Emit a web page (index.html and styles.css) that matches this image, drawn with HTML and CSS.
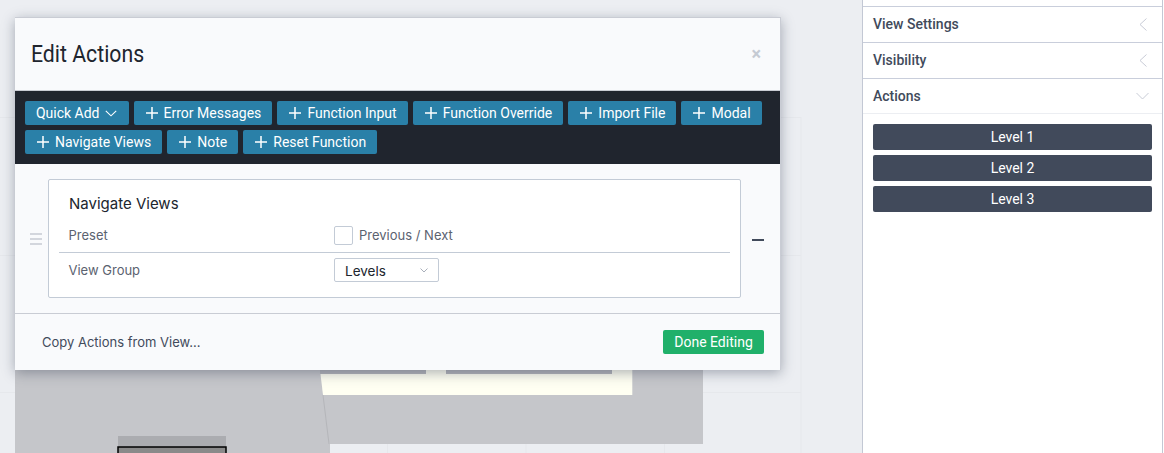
FILE: index.html
```html
<!DOCTYPE html>
<html lang="en">
<head>
<meta charset="utf-8">
<title>Edit Actions</title>
<link rel="stylesheet" href="styles.css">
</head>
<body>
<div class="app">
  <main class="canvas">
    <svg class="plan" width="862" height="453" viewBox="0 0 862 453">
      <g class="grid">
        <path d="M0 117.5H801M0 255.5H801M0 392.5H801M111.5 117V453M249.5 117V453M387.5 117V453M526 117V453M664.5 117V453M801 117V453"/>
      </g>
      <path class="slab" d="M15 370H330V453H15Z"/>
      <path class="slab" d="M320 370H703V444H330L328 444Z"/>
      <path class="sun" d="M320 370H632.300V395H323Z"/>
      <path class="edge" d="M323 395L329 444"/>
      <rect class="strip" x="320" y="370" width="106" height="4"/>
      <rect class="strip" x="446" y="370" width="166" height="4"/>
      <rect class="strip-light" x="118" y="436" width="108" height="11"/>
      <rect class="block" x="118" y="447" width="108" height="12"/>
    </svg>
    <section class="modal">
      <header class="modal-head">
        <h1 class="modal-title">Edit Actions</h1>
        <span class="close">×</span>
      </header>
      <div class="toolbar">
        <button class="tool">Quick Add
          <svg class="chev" width="12" height="7" viewBox="0 0 12 7"><path d="M.8.8L6 5.8 11.2.8"/></svg>
        </button>
        <button class="tool"><svg class="plus" width="12" height="12" viewBox="0 0 12 12"><path d="M6 0V12M0 6H12"/></svg>Error Messages</button>
        <button class="tool"><svg class="plus" width="12" height="12" viewBox="0 0 12 12"><path d="M6 0V12M0 6H12"/></svg>Function Input</button>
        <button class="tool"><svg class="plus" width="12" height="12" viewBox="0 0 12 12"><path d="M6 0V12M0 6H12"/></svg>Function Override</button>
        <button class="tool"><svg class="plus" width="12" height="12" viewBox="0 0 12 12"><path d="M6 0V12M0 6H12"/></svg>Import File</button>
        <button class="tool"><svg class="plus" width="12" height="12" viewBox="0 0 12 12"><path d="M6 0V12M0 6H12"/></svg>Modal</button>
        <button class="tool"><svg class="plus" width="12" height="12" viewBox="0 0 12 12"><path d="M6 0V12M0 6H12"/></svg>Navigate Views</button>
        <button class="tool"><svg class="plus" width="12" height="12" viewBox="0 0 12 12"><path d="M6 0V12M0 6H12"/></svg>Note</button>
        <button class="tool"><svg class="plus" width="12" height="12" viewBox="0 0 12 12"><path d="M6 0V12M0 6H12"/></svg>Reset Function</button>
      </div>
      <div class="modal-body">
        <span class="drag"><i></i><i></i><i></i></span>
        <div class="card">
          <h2 class="card-title">Navigate Views</h2>
          <div class="row row-first">
            <span class="label">Preset</span>
            <label class="check"><span class="box"></span>Previous / Next</label>
          </div>
          <div class="row row-second">
            <span class="label">View Group</span>
            <span class="select"><span class="select-text">Levels</span>
              <svg class="select-chev" width="8" height="5" viewBox="0 0 8 5"><path d="M.5.5L4 4 7.500.5"/></svg>
            </span>
          </div>
        </div>
        <span class="minus"></span>
      </div>
      <footer class="modal-foot">
        <span class="copy">Copy Actions from View...</span>
        <button class="done">Done Editing</button>
      </footer>
    </section>
  </main>
  <aside class="sidebar">
    <div class="panel panel-top">View Settings
      <svg class="arrow" width="8" height="13" viewBox="0 0 8 13"><path d="M7.500.5L1 6.500 7.500 12.500"/></svg>
    </div>
    <div class="panel">Visibility
      <svg class="arrow" width="8" height="13" viewBox="0 0 8 13"><path d="M7.500.5L1 6.500 7.500 12.500"/></svg>
    </div>
    <div class="panel panel-open">Actions
      <svg class="arrow" width="13" height="8" viewBox="0 0 13 8"><path d="M.5 1L6.500 7 12.500 1"/></svg>
    </div>
    <div class="levels">
      <button class="level">Level 1</button>
      <button class="level">Level 2</button>
      <button class="level">Level 3</button>
    </div>
  </aside>
</div>
</body>
</html>
```

FILE: styles.css
```css
* { box-sizing: border-box; }
html, body { margin: 0; height: 100%; }
body { background: #fff; font-family: Inter, "Liberation Sans", sans-serif; overflow: hidden; }
button { font: inherit; border: 0; margin: 0; }

.app { display: flex; width: 1164px; height: 453px; }

.canvas { position: relative; width: 862px; height: 453px; background: #eceef2; overflow: hidden; }
.plan { position: absolute; left: 0; top: 0; display: block; }
.grid path { fill: none; stroke: #e6e8ec; stroke-width: 1; }
.slab { fill: #c5c6ca; }
.sun { fill: #fffff2; }
.edge { fill: none; stroke: #b5b6ba; stroke-width: 1; }
.strip { fill: #b4b5bb; }
.strip-light { fill: #abacb0; }
.block { fill: #8a8a8a; stroke: #000; stroke-width: 1.500; }

.modal { position: absolute; left: 15px; top: 17px; width: 766px; height: 353px; background: #f9fafc; border-top: 1px solid #c9ccd4; border-right: 1px solid #c9ccd4; box-shadow: 0 3px 12px rgba(50, 60, 80, .4); display: flex; flex-direction: column; }
.modal-head { height: 73px; flex: none; display: flex; align-items: center; justify-content: space-between; padding: 0 19px 0 16px; border-bottom: 1px solid #c9ccd4; }
.modal-title { margin: 0; font: 400 24px/1 Roboto, sans-serif; color: #20252e; transform: scaleX(.885); transform-origin: left center; }
.close { font: 700 18px/1 Roboto, sans-serif; color: #c5cad3; }

.toolbar { flex: none; height: 73px; background: #20252e; padding: 10px 10px 0; display: flex; flex-wrap: wrap; align-content: flex-start; gap: 5px; }
.tool { height: 24px; padding: 0 11.100px 0 12px; display: inline-flex; align-items: center; gap: 6px; background: #2a80a8; color: #fff; border-radius: 2px; font: 400 14px/1 Roboto, sans-serif; }
.tool:first-child { padding-left: 10.900px; }
.plus path { fill: none; stroke: #fff; stroke-width: 1.500; }
.chev path { fill: none; stroke: #fff; stroke-width: 1.100; }

.modal-body { flex: 1; position: relative; padding: 15px 39px 15px 33px; display: flex; align-items: flex-start; }
.drag { position: absolute; left: 15px; top: 69px; display: flex; flex-direction: column; gap: 3px; }
.drag i { display: block; width: 12px; height: 2px; background: #d3d6dd; }
.card { width: 693px; height: 119px; background: #fff; border: 1px solid #c3cbd6; border-radius: 2px; padding: 0 10px; }
.card-title { margin: 0; padding: 15px 0 0 10px; height: 41px; font: 400 15px/18px Inter, sans-serif; color: #20252e; }
.row { display: flex; align-items: center; padding-left: 9.500px; font-size: 13px; color: #5b6270; }
.row-first { height: 32px; padding-bottom: 3px; border-bottom: 1px solid #c3cbd6; }
.row-second { height: 36px; padding-bottom: 2px; }
.label { width: 265.500px; flex: none; }
.check { display: flex; align-items: center; gap: 6px; }
.box { width: 19px; height: 19px; margin-top: 1px; background: #fff; border: 1px solid #c3cbd6; border-radius: 2px; }
.select { width: 105px; height: 24px; display: flex; align-items: center; justify-content: space-between; padding: 0 10px; border: 1px solid #c3cbd6; border-radius: 2px; color: #20252e; font-size: 13.500px; }
.select-text { padding-top: 2px; }
.select-chev path { fill: none; stroke: #a9afba; stroke-width: 1; }
.minus { position: absolute; left: 737px; top: 75px; width: 12px; height: 2px; background: #414a5b; }

.modal-foot { flex: none; height: 57px; border-top: 1px solid #c9ccd4; display: flex; align-items: center; justify-content: space-between; padding: 0 16px 0 27px; }
.copy { font: 400 13px/1 Inter, sans-serif; color: #414a5b; }
.done { width: 101px; height: 24px; background: #20b06a; color: #fff; border-radius: 2px; font: 400 14px/1 Roboto, sans-serif; padding: 0; }

.sidebar { width: 301px; height: 453px; background: #fff; border-left: 1px solid #c3c8d4; border-right: 1px solid #c3c8d4; }
.panel { height: 36px; padding: 0 15px 1px 10px; display: flex; align-items: center; justify-content: space-between; border-bottom: 1px solid #c9cedb; font: 500 14px/1 Roboto, sans-serif; color: #414a5b; }
.panel-top { height: 37px; margin-top: 6px; border-top: 1px solid #c9cedb; }
.panel-open { border-bottom-color: #eceef2; height: 35px; padding: 0 13px 0 10px; }
.arrow path { fill: none; stroke: #c8ccd6; stroke-width: 1; }
.levels { padding: 10px 10px 0; display: flex; flex-direction: column; gap: 5px; }
.level { height: 26px; background: #414a5b; color: #fff; border-radius: 2px; font: 400 14px/1 Roboto, sans-serif; }
```
